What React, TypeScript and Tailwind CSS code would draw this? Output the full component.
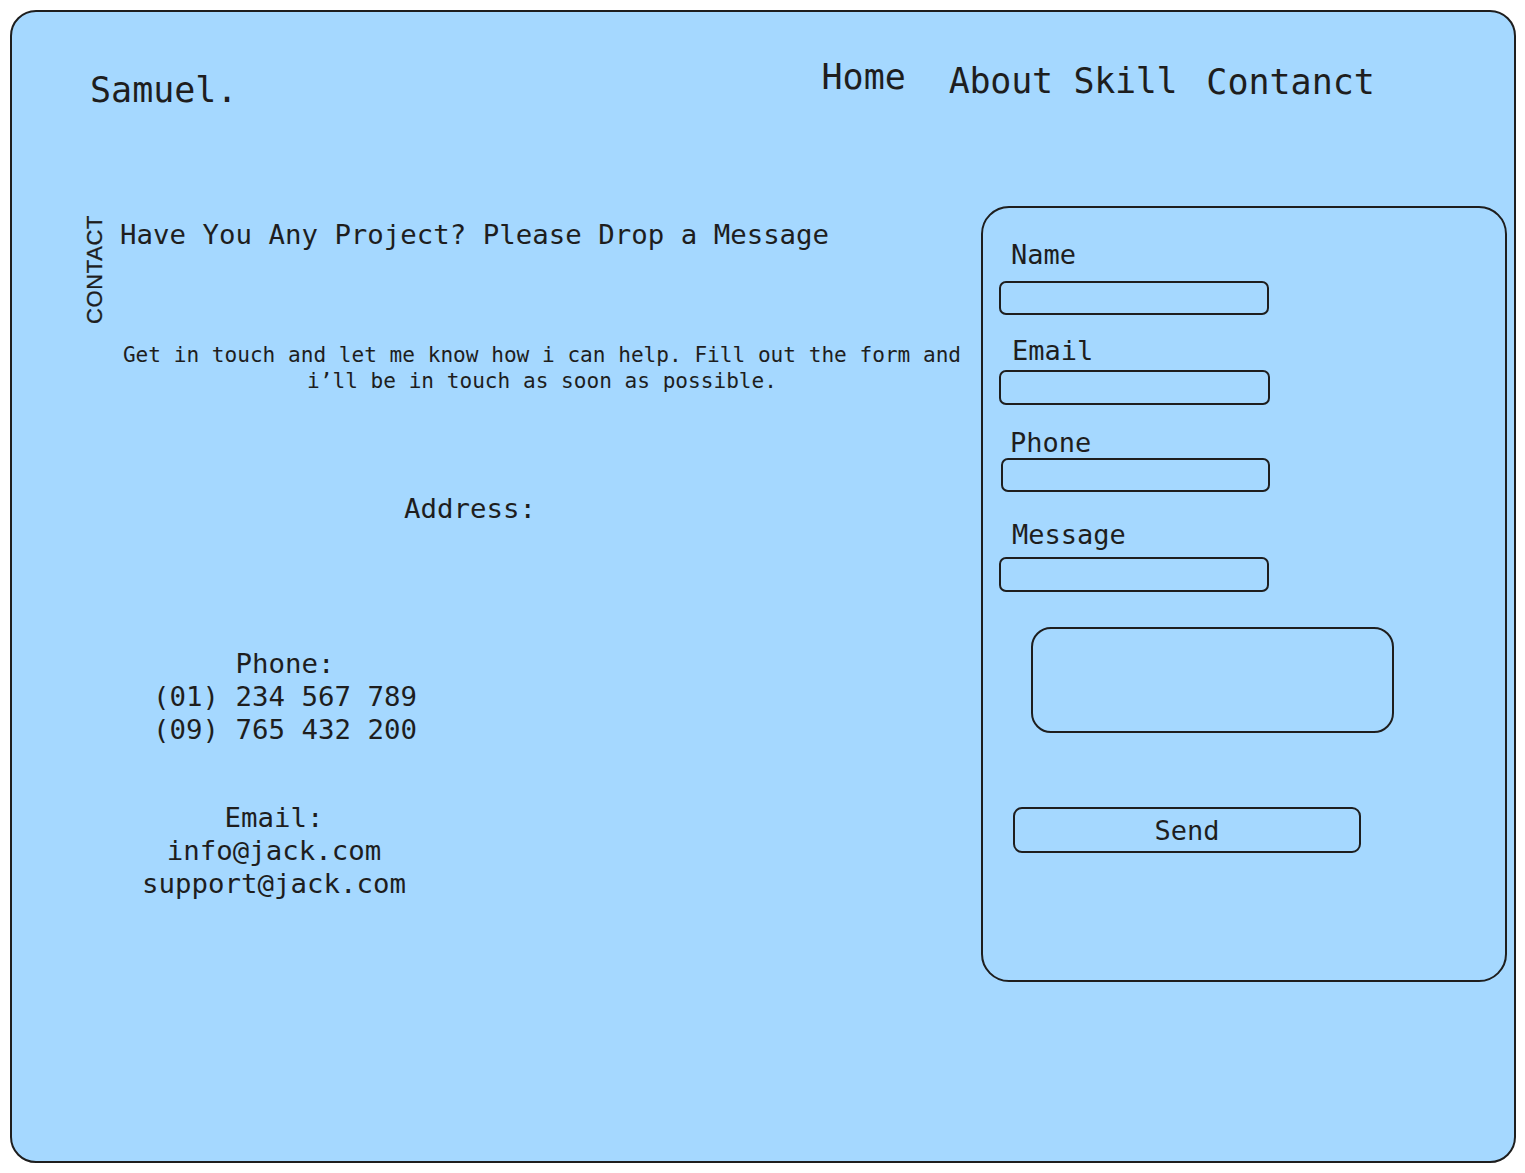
import React from "react";

const mono = "font-['DejaVu_Sans_Mono','Liberation_Mono',monospace]";

export default function App() {
  return (
    <div className="min-h-[1173px] w-[1525px] bg-white pt-[10px] pl-[10px]">
      <div
        className={`${mono} flex h-[1153px] w-[1506px] flex-col rounded-[26px] border-2 border-[#1e1e1e] bg-[#a5d8ff] text-[#1e1e1e]`}
      >
        {/* header */}
        <header className="flex h-[195px] items-start pt-[48px] pl-[78px]">
          <div className="mt-[13px] text-[35px] leading-[34px]">Samuel.</div>
          <nav className="ml-[584px] flex items-start text-[35px] leading-[34px]">
            <a className="mt-0">Home</a>
            <a className="ml-[43px] mt-[4px] whitespace-pre tracking-[-0.3px]">About Skill</a>
            <a className="ml-[29px] mt-[5px]">Contanct</a>
          </nav>
        </header>

        {/* main */}
        <div className="flex items-start">
          {/* left column */}
          <div className="flex w-[969px] flex-col pl-[72px]">
            <div className="mt-[8px] flex h-[110px] items-start">
              <div className="rotate-180 font-['Liberation_Sans',Arial,sans-serif] text-[22px] leading-[22px] tracking-[0.6px] [-webkit-text-stroke:0.3px_#1e1e1e] [writing-mode:vertical-rl]">
                CONTACT
              </div>
              <h1 className="ml-[14px] mt-[6px] text-[27.4px] leading-[27px]">
                Have You Any Project? Please Drop a Message
              </h1>
            </div>
            <p className="ml-[33px] mt-[17px] w-[850px] text-center text-[21.1px] leading-[26px]">
              Get in touch and let me know how i can help. Fill out the form and
              <br />
              i’ll be in touch as soon as possible.
            </p>
            <div className="ml-[286px] mt-[98px] w-[200px] text-center text-[27.4px] leading-[33px]">
              Address:
            </div>
            <div className="ml-[51px] mt-[122px] w-[300px] text-center text-[27.4px] leading-[33px]">
              <div>Phone:</div>
              <div className="whitespace-pre">(01) 234 567 789</div>
              <div className="whitespace-pre">(09) 765 432 200</div>
            </div>
            <div className="ml-[40px] mt-[55px] w-[300px] text-center text-[27.4px] leading-[33px]">
              <div>Email:</div>
              <div>info@jack.com</div>
              <div>support@jack.com</div>
            </div>
          </div>

          {/* form */}
          <form className="-mt-px flex h-[776px] w-[526px] flex-col rounded-[28px] border-2 border-[#1e1e1e] pt-[33px]">
            <label className="ml-[28px] text-[27px] leading-[27px]">Name</label>
            <div className="ml-[16px] mt-[13px] h-[34px] w-[270px] rounded-[7px] border-2 border-[#1e1e1e]" />
            <label className="ml-[29px] mt-[22px] text-[27px] leading-[27px]">Email</label>
            <div className="ml-[16px] mt-[6px] h-[35px] w-[271px] rounded-[7px] border-2 border-[#1e1e1e]" />
            <label className="ml-[27px] mt-[24px] text-[27px] leading-[27px]">Phone</label>
            <div className="ml-[18px] mt-[2px] h-[34px] w-[269px] rounded-[7px] border-2 border-[#1e1e1e]" />
            <label className="ml-[29px] mt-[29px] text-[27px] leading-[27px]">Message</label>
            <div className="ml-[16px] mt-[9px] h-[35px] w-[270px] rounded-[7px] border-2 border-[#1e1e1e]" />
            <div className="ml-[48px] mt-[35px] h-[106px] w-[363px] rounded-[20px] border-2 border-[#1e1e1e]" />
            <button
              type="button"
              className="ml-[30px] mt-[74px] flex h-[46px] w-[348px] items-center justify-center rounded-[9px] border-2 border-[#1e1e1e] text-[27px] leading-[27px]"
            >
              Send
            </button>
          </form>
        </div>
      </div>
    </div>
  );
}
